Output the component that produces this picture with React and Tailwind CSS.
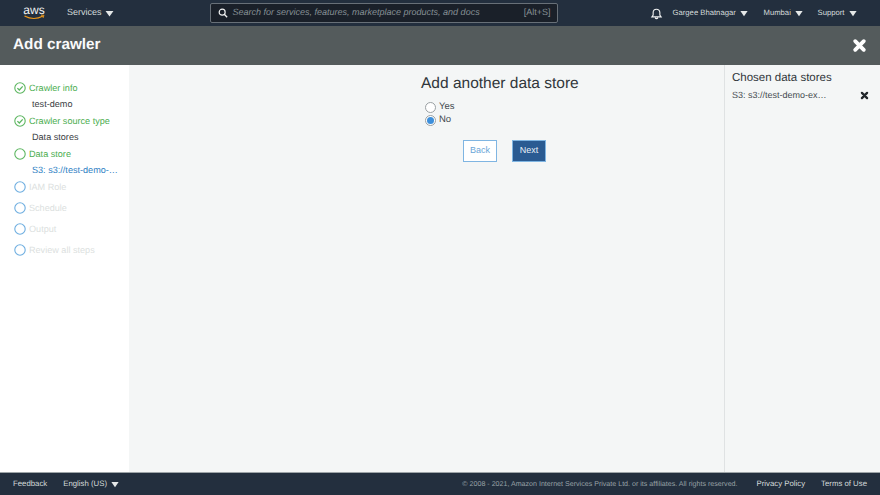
import React from 'react';

const Caret = ({ className = '' }) => (
  <svg viewBox="0 0 10 8" className={`w-[8px] h-[7px] ${className}`}>
    <path d="M0.5 1 H9.5 L5 7.5 Z" fill="#e5e8e8" />
  </svg>
);

const Cross = ({ className = '', color = '#fff' }) => (
  <svg viewBox="0 0 14 14" className={className}>
    <path d="M3 3 L11 11 M11 3 L3 11" stroke={color} strokeWidth="3.6" strokeLinecap="round" />
  </svg>
);

const StepIcon = ({ color, checked }) => (
  <svg viewBox="0 0 12 12" className="w-[12px] h-[12px] shrink-0">
    <circle cx="6" cy="6" r="5.2" fill="none" stroke={color} strokeWidth="1.1" />
    {checked && <path d="M3.4 6.1 L5.3 8 L8.7 4.4" fill="none" stroke={color} strokeWidth="1.3" />}
  </svg>
);

const Step = ({ label, sub, subColor = 'text-[#3b4043]', done, active, className = '' }) => (
  <div className={className}>
    <div className="flex items-center h-[16px]">
      <StepIcon color={done || active ? '#5cb660' : '#6eaee0'} checked={done} />
      <span className={`ml-[3px] text-[9.1px] leading-[16px] ${done || active ? 'text-[#4cae50]' : 'text-[#dcdfe0]'}`}>{label}</span>
    </div>
    {sub && <div className={`ml-[18px] h-[16px] text-[9.1px] leading-[16px] ${subColor}`}>{sub}</div>}
  </div>
);

export default function App() {
  return (
    <div className="w-[880px] h-[495px] flex flex-col overflow-hidden bg-white font-['Liberation_Sans',sans-serif] [text-rendering:geometricPrecision]">
      <header className="h-[26px] shrink-0 bg-[#232f3e] flex items-center text-[#d5dbdb]">
        <div className="w-[67px] shrink-0 flex justify-center pl-[1px]">
          <svg viewBox="0 0 24 18" className="w-[24px] h-[18px]">
            <text x="12" y="10" textAnchor="middle" fontSize="12" fontFamily="Liberation Sans, sans-serif" fill="#f2f3f3">aws</text>
            <path d="M2.5 12 Q12 17 21 12" fill="none" stroke="#f09a1a" strokeWidth="1.1" />
            <path d="M19 11.2 L22 11.3 L21 14" fill="none" stroke="#f09a1a" strokeWidth="0.9" />
          </svg>
        </div>
        <span className="text-[9px]">Services</span>
        <Caret className="ml-[3px] w-[9px]" />
        <div className="ml-[96px] w-[348px] h-[20px] border border-[#687078] rounded-[2px] bg-[#1a2029] flex items-center px-[6px]">
          <svg viewBox="0 0 12 12" className="w-[10px] h-[10px] ml-[1px] shrink-0">
            <circle cx="5" cy="5" r="3.6" fill="none" stroke="#f2f3f3" strokeWidth="1.4" />
            <path d="M7.8 7.8 L11 11" stroke="#f2f3f3" strokeWidth="1.6" />
          </svg>
          <span className="ml-[5px] text-[9px] italic text-[#879196]">Search for services, features, marketplace products, and docs</span>
          <span className="ml-auto text-[9px] text-[#879196]">[Alt+S]</span>
        </div>
        <svg viewBox="0 0 14 14" className="ml-[92px] w-[13px] h-[13px]">
          <path d="M2 10.6 H12 L10.6 8.6 V6 A3.6 3.6 0 0 0 3.4 6 V8.6 Z M5.6 11.6 A1.5 1.5 0 0 0 8.4 11.6" fill="none" stroke="#f2f3f3" strokeWidth="1.2" />
        </svg>
        <span className="ml-[10px] w-[63px] whitespace-nowrap text-[7.7px]">Gargee Bhatnagar</span>
        <Caret className="ml-[4px]" />
        <span className="ml-[16px] w-[27px] whitespace-nowrap text-[7.7px]">Mumbai</span>
        <Caret className="ml-[4px]" />
        <span className="ml-[15px] w-[27px] whitespace-nowrap text-[7.7px]">Support</span>
        <Caret className="ml-[4px]" />
      </header>

      <div className="h-[39px] shrink-0 bg-[#545b5c] flex items-center justify-between pl-[13px] pr-[13px]">
        <h1 className="text-[15.3px] font-bold text-[#fafafa]">Add crawler</h1>
        <Cross className="w-[15px] h-[15px]" />
      </div>

      <div className="flex-1 flex min-h-0">
        <nav className="w-[129px] shrink-0 bg-white pl-[14px] pt-[15px]">
          <Step label="Crawler info" sub="test-demo" done />
          <Step label="Crawler source type" sub="Data stores" done className="mt-[1px]" />
          <Step label="Data store" sub="S3: s3://test-demo-…" subColor="text-[#2f7fc4]" active className="mt-[1px]" />
          <Step label="IAM Role" className="mt-[1px]" />
          <Step label="Schedule" className="mt-[5px]" />
          <Step label="Output" className="mt-[5px]" />
          <Step label="Review all steps" className="mt-[5px]" />
        </nav>

        <main className="flex-1 bg-[#f4f6f6] pl-[292px]">
          <h2 className="mt-[10px] text-[15.5px] leading-[18px] whitespace-nowrap text-[#31373b]">Add another data store</h2>
          <div className="mt-[7px] pl-[4px] text-[9.5px] text-[#444b50]">
            <label className="flex items-center h-[14px]">
              <span className="w-[11px] h-[11px] rounded-full border border-[#9aa0a3] bg-white" />
              <span className="ml-[3px]">Yes</span>
            </label>
            <label className="flex items-center h-[13px]">
              <span className="w-[11px] h-[11px] rounded-full border border-[#9aa0a3] bg-white flex items-center justify-center">
                <span className="w-[7px] h-[7px] rounded-full bg-[#3d8fdb]" />
              </span>
              <span className="ml-[3px]">No</span>
            </label>
          </div>
          <div className="mt-[13px] ml-[42px] flex gap-[15px] text-[9px]">
            <button className="w-[34px] h-[22px] border border-[#7fb5e2] bg-white text-[#6aa6d8]">Back</button>
            <button className="w-[34px] h-[22px] border border-[#7fb5e2] bg-[#2a5b92] text-[#e8eff6]">Next</button>
          </div>
        </main>

        <aside className="w-[156px] shrink-0 bg-[#f4f6f6] border-l border-[#dfe2e3] px-[7px] pt-[6px]">
          <h3 className="text-[11.5px] leading-[14px] text-[#31373b]">Chosen data stores</h3>
          <div className="mt-[4px] flex items-center justify-between text-[9px] text-[#444b50]">
            <span>S3: s3://test-demo-ex…</span>
            <Cross className="w-[9px] h-[9px] mr-[4px]" color="#22272b" />
          </div>
        </aside>
      </div>

      <footer className="h-[23px] shrink-0 bg-[#232f3e] border-t border-[#9ea5a8] flex items-center text-[7.8px] text-[#d5dbdb] pl-[13px] pr-[13px]">
        <span>Feedback</span>
        <span className="ml-[16px]">English (US)</span>
        <Caret className="ml-[4px]" />
        <span className="ml-auto text-[7.1px] text-[#98a1a6]">© 2008 - 2021, Amazon Internet Services Private Ltd. or its affiliates. All rights reserved.</span>
        <span className="ml-[19px]">Privacy Policy</span>
        <span className="ml-[16px]">Terms of Use</span>
      </footer>
    </div>
  );
}
